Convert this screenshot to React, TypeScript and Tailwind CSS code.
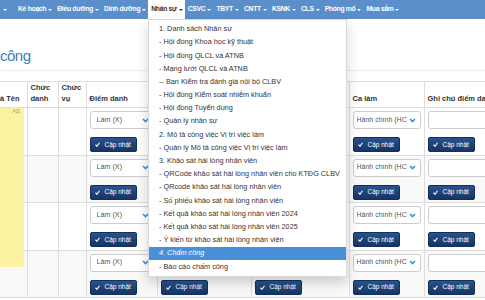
import React from "react";

const navItems = [
  "Kế hoạch",
  "Điều dưỡng",
  "Dinh dưỡng",
  "Nhân sự",
  "CSVC",
  "TBYT",
  "CNTT",
  "KSNK",
  "CLS",
  "Phòng mổ",
  "Mua sắm",
];

const menuItems = [
  "1. Danh sách Nhân sự",
  "- Hội đồng Khoa học kỹ thuật",
  "- Hội đồng QLCL và ATNB",
  "- Mạng lưới QLCL và ATNB",
  "-- Ban Kiểm tra đánh giá nội bộ CLBV",
  "- Hội đồng Kiểm soát nhiễm khuẩn",
  "- Hội đồng Tuyển dụng",
  "- Quản lý nhân sự",
  "2. Mô tả công việc Vị trí việc làm",
  "- Quản lý Mô tả công việc Vị trí việc làm",
  "3. Khảo sát hài lòng nhân viên",
  "- QRCode khảo sát hài lòng nhân viên cho KTĐG CLBV",
  "- QRcode khảo sát hài lòng nhân viên",
  "- Số phiếu khảo sát hài lòng nhân viên",
  "- Kết quả khảo sát hài lòng nhân viên 2024",
  "- Kết quả khảo sát hài lòng nhân viên 2025",
  "- Ý kiến từ khảo sát hài lòng nhân viên",
  "4. Chấm công",
  "- Báo cáo chấm công",
];

const Caret = ({ dark }: { dark?: boolean }) => (
  <span
    className={
      dark
        ? "ml-[2px] inline-block h-0 w-0 border-x-[2px] border-t-[2.5px] border-x-transparent border-t-[#333]"
        : "ml-[2px] inline-block h-0 w-0 border-x-[2px] border-t-[2.5px] border-x-transparent border-t-white"
    }
  />
);

const Chevron = () => (
  <svg width="7" height="5" viewBox="0 0 7 5" className="shrink-0">
    <path d="M1 1 L3.5 3.5 L6 1" fill="none" stroke="#3d8fdc" strokeWidth="1.6" />
  </svg>
);

const SelectBox = ({ value, tight }: { value: string; tight?: boolean }) => (
  <div
    className={
      tight
        ? "flex h-[18px] w-full items-center justify-between gap-[2px] rounded-[3px] border border-[#ccc] bg-white pl-[3px] pr-[4px] text-[7px] text-[#555]"
        : "flex h-[18px] w-full items-center justify-between gap-[3px] rounded-[3px] border border-[#ccc] bg-white pl-[6px] pr-[4px] text-[7.2px] text-[#555]"
    }
  >
    <span className="overflow-hidden whitespace-nowrap">{value}</span>
    <Chevron />
  </div>
);

const UpdateButton = () => (
  <button
    type="button"
    className="mt-[8px] flex h-[15px] items-center gap-[5px] rounded-[2px] border border-[#12305a] bg-linear-to-b from-[#29528f] to-[#163562] pl-[4px] pr-[5px] text-[6.5px] text-white"
  >
    <svg width="5" height="5" viewBox="0 0 10 10">
      <path d="M1 5.5 L4 8.5 L9 1.5" fill="none" stroke="white" strokeWidth="2.2" />
    </svg>
    Cập nhật
  </button>
);

const rows = [0, 1, 2, 3];

export default function App() {
  return (
    <div className="relative h-[300px] w-[485px] overflow-hidden bg-white font-['Liberation_Sans',Arial,sans-serif] text-[#333]">
      <nav className="flex h-[19px] items-center bg-[#5b8fcb] text-[6.8px] font-bold tracking-[-0.3px] text-white">
        <span className="ml-[1px] mr-[8px] flex items-center">
          <Caret />
        </span>
        {navItems.map((item) => {
          const active = item === "Nhân sự";
          return (
            <div
              key={item}
              className={
                active
                  ? "flex h-full items-center bg-white pl-[3px] pr-[2px] text-[#333]"
                  : "flex h-full items-center pl-[3px] pr-[2px]"
              }
            >
              {item}
              <Caret dark={active} />
            </div>
          );
        })}
      </nav>

      <main>
        <h1 className="mt-[28px] text-[15px] leading-[18px] tracking-[-0.5px] text-[#3b7bbf]">công</h1>
        <hr className="mt-[5px] border-[#eee]" />

        <table className="mt-[10px] w-[540px] table-fixed border-collapse text-[7.5px]">
          <colgroup>
            <col className="w-[27px]" />
            <col className="w-[31px]" />
            <col className="w-[28px]" />
            <col className="w-[71px]" />
            <col className="w-[94px]" />
            <col className="w-[98px]" />
            <col className="w-[75px]" />
            <col className="w-[116px]" />
          </colgroup>
          <thead>
            <tr className="h-[26px] text-left align-bottom leading-[11px]">
              <th className="border border-l-0 border-[#ddd] px-0 pb-[3px] font-bold">à Tên</th>
              <th className="border border-[#ddd] px-[3px] pb-[3px] font-bold">Chức danh</th>
              <th className="border border-[#ddd] px-[3px] pb-[3px] font-bold">Chức vụ</th>
              <th className="border border-[#ddd] px-[3px] pb-[3px] font-bold">Điểm danh</th>
              <th className="border border-[#ddd] px-[3px] pb-[3px] font-bold">Giờ vào</th>
              <th className="border border-[#ddd] px-[3px] pb-[3px] font-bold">Giờ ra</th>
              <th className="border border-[#ddd] px-[3px] pb-[3px] font-bold">Ca làm</th>
              <th className="whitespace-nowrap border border-[#ddd] px-[3px] pb-[3px] font-bold">
                Ghi chú điểm danh
              </th>
            </tr>
          </thead>
          <tbody>
            {rows.map((r) => (
              <tr key={r} className={r % 2 === 1 ? "h-[47.5px] bg-[#f9f9f9]" : "h-[47.5px]"}>
                <td className="border border-l-0 border-[#ddd]" />
                <td className="border border-[#ddd]" />
                <td className="border border-[#ddd]" />
                <td className="border border-[#ddd] px-[3px] pt-[3px] align-top">
                  <SelectBox value="Làm (X)" />
                  <UpdateButton />
                </td>
                <td className="border border-[#ddd] px-[3px] pt-[3px] align-top">
                  <div className="h-[18px] rounded-[3px] border border-[#ccc] bg-white" />
                  <UpdateButton />
                </td>
                <td className="border border-[#ddd] px-[3px] pt-[3px] align-top">
                  <div className="h-[18px] rounded-[3px] border border-[#ccc] bg-white" />
                  <UpdateButton />
                </td>
                <td className="border border-[#ddd] px-[3px] pt-[3px] align-top">
                  <SelectBox value="Hành chính (HC)" tight />
                  <UpdateButton />
                </td>
                <td className="border border-[#ddd] px-[3px] pt-[3px] align-top">
                  <div className="h-[18px] rounded-[3px] border border-[#ccc] bg-white" />
                  <UpdateButton />
                </td>
              </tr>
            ))}
          </tbody>
        </table>
      </main>

      {/* sticky note over the name column */}
      <div className="absolute left-0 top-[108px] h-[159px] w-[24px] bg-[#fbf3a2]">
        <svg width="9" height="5" viewBox="0 0 9 5" className="absolute right-[4px] top-[1px]">
          <path d="M0.5 4 L3.5 1 M2 1 H3.5 V2.5" fill="none" stroke="#a9a48a" strokeWidth="0.7" />
          <rect x="5" y="0.8" width="3" height="3" fill="none" stroke="#a9a48a" strokeWidth="0.7" />
        </svg>
      </div>

      {/* Nhân sự dropdown */}
      <ul className="absolute left-[148px] top-[19px] w-[199px] border border-[rgba(0,0,0,0.15)] bg-white pb-[2px] pt-[3px] text-[7.3px] text-[#333] shadow-[0_6px_12px_rgba(0,0,0,0.175)]">
        {menuItems.map((m) => (
          <li
            key={m}
            className={
              m === "4. Chấm công"
                ? "flex h-[13.2px] items-center whitespace-nowrap bg-[#4a90d9] pl-[10px] italic text-white"
                : "flex h-[13.2px] items-center whitespace-nowrap pl-[10px]"
            }
          >
            {m}
          </li>
        ))}
      </ul>
    </div>
  );
}
